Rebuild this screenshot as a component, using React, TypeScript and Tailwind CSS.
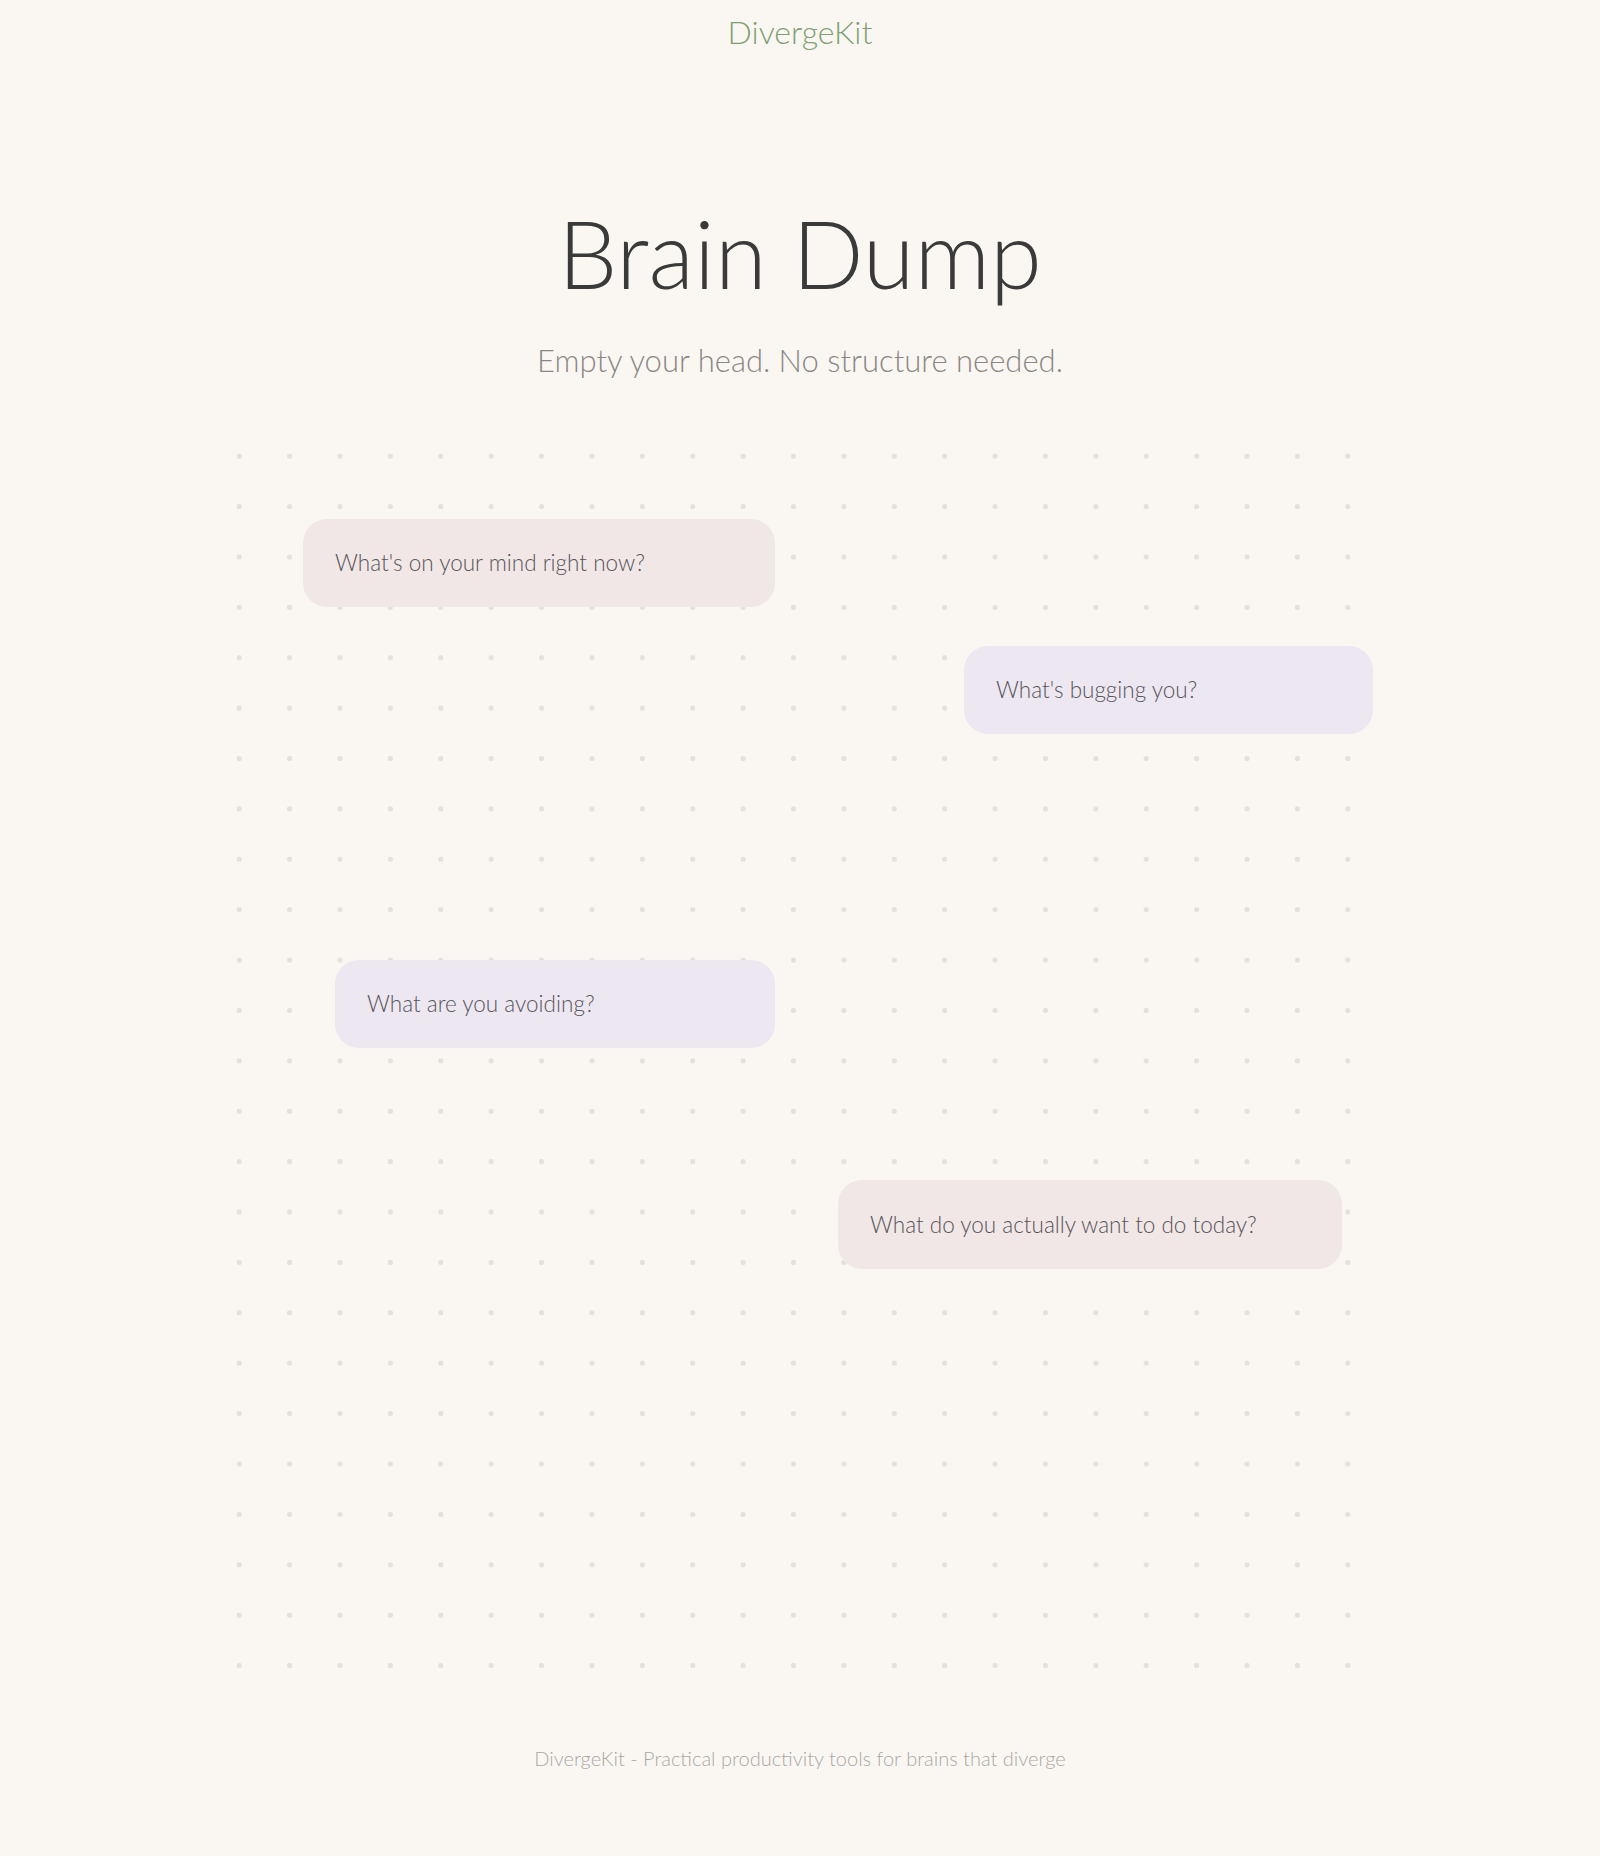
import React from "react";

const cards = [
  { text: "What's on your mind right now?", left: 89, top: 88, w: 472, h: 88, bg: "bg-[#f1e7e6]" },
  { text: "What's bugging you?", left: 750, top: 215, w: 409, h: 88, bg: "bg-[#ede7f1]" },
  { text: "What are you avoiding?", left: 121, top: 529, w: 440, h: 88, bg: "bg-[#ede7f1]" },
  { text: "What do you actually want to do today?", left: 624, top: 749, w: 504, h: 89, bg: "bg-[#f1e7e6]" },
];

export default function App() {
  return (
    <div className="min-h-[1856px] bg-[#faf7f3] font-['Lato','Noto_Sans',sans-serif] font-light">
      <header className="pt-[12px] text-center">
        <div className="text-[32px] leading-[40px] text-[#7fa072]">DivergeKit</div>
      </header>
      <main className="flex flex-col items-center">
        <h1 className="mt-[151px] text-[94px] leading-[100px] text-[#3a3a3a] font-light">Brain Dump</h1>
        <p className="mt-[37px] text-[31px] leading-[40px] text-[#8a8785]">Empty your head. No structure needed.</p>
        <div className="relative mt-[51px] h-[1260px] w-[1172px] bg-[radial-gradient(circle,#e4e1dd_2.4px,transparent_2.9px)] bg-[length:50.4px_50.4px]">
          {cards.map((c) => (
            <div
              key={c.text}
              className={`absolute flex items-center rounded-[24px] px-[32px] ${c.bg}`}
              style={{ left: c.left, top: c.top, width: c.w, height: c.h }}
            >
              <span className="text-[22.5px] leading-[32px] text-[#58555a]">{c.text}</span>
            </div>
          ))}
        </div>
        <footer className="mt-[53px] pb-[83px] text-[20px] leading-[28px] text-[#aaa7a4]">
          DivergeKit - Practical productivity tools for brains that diverge
        </footer>
      </main>
    </div>
  );
}
